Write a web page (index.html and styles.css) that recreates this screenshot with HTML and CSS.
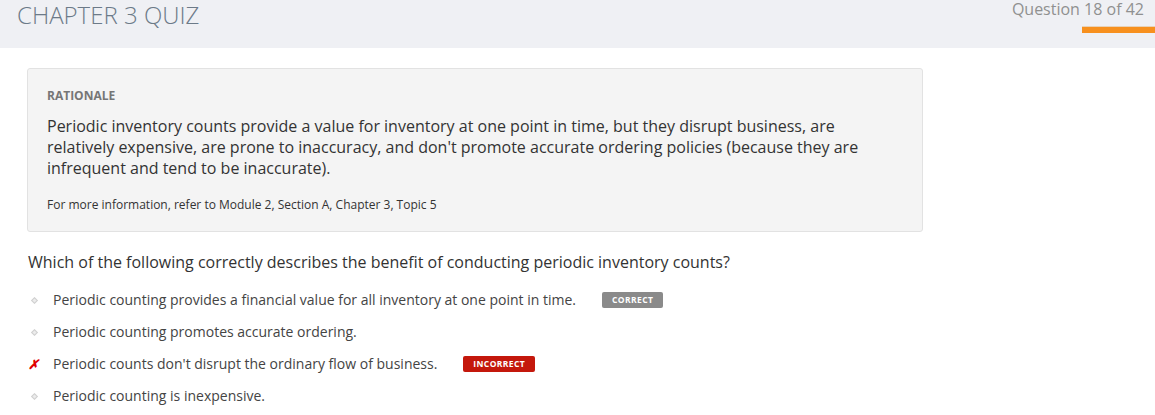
FILE: index.html
```html
<!DOCTYPE html>
<html>
<head>
<meta charset="utf-8">
<link rel="stylesheet" href="styles.css">
</head>
<body>
<header class="topbar">
  <h1 class="title">CHAPTER 3 QUIZ</h1>
  <div class="progress">
    <div class="progress-text">Question 18 of 42</div>
    <div class="progress-bar"></div>
  </div>
</header>
<main class="content">
  <section class="rationale">
    <div class="rationale-label">RATIONALE</div>
    <p class="rationale-body">Periodic inventory counts provide a value for inventory at one point in time, but they disrupt business, are relatively expensive, are prone to inaccuracy, and don't promote accurate ordering policies (because they are infrequent and tend to be inaccurate).</p>
    <p class="rationale-ref">For more information, refer to Module 2, Section A, Chapter 3, Topic 5</p>
  </section>
  <h2 class="question">Which of the following correctly describes the benefit of conducting periodic inventory counts?</h2>
  <ul class="choices">
    <li class="choice"><span class="marker"><span class="dot"></span></span><span class="choice-text">Periodic counting provides a financial value for all inventory at one point in time.</span><span class="badge badge-correct">CORRECT</span></li>
    <li class="choice"><span class="marker"><span class="dot"></span></span><span class="choice-text">Periodic counting promotes accurate ordering.</span></li>
    <li class="choice"><span class="marker marker-cross"><span class="cross">✗</span></span><span class="choice-text">Periodic counts don't disrupt the ordinary flow of business.</span><span class="badge badge-incorrect">INCORRECT</span></li>
    <li class="choice"><span class="marker"><span class="dot"></span></span><span class="choice-text">Periodic counting is inexpensive.</span></li>
  </ul>
</main>
</body>
</html>
```
FILE: styles.css
```css
* { box-sizing: border-box; }
body {
  margin: 0;
  font-family: "Open Sans", "Noto Sans", sans-serif;
  background: #ffffff;
  color: #333;
}
.topbar {
  background: #eff0f4;
  height: 48px;
  display: flex;
  justify-content: space-between;
  align-items: flex-start;
  padding-left: 17px;
}
.title {
  margin: 0;
  font-weight: 300;
  font-size: 24px;
  line-height: 30px;
  color: #6c7a88;
}
.progress {
  display: flex;
  flex-direction: column;
  align-items: flex-end;
}
.progress-text {
  font-size: 16px;
  line-height: 18px;
  color: #909090;
  padding-right: 11px;
}
.progress-bar {
  margin-top: 8px;
  width: 73px;
  height: 7px;
  background: #f7901e;
  border-top: 1px solid #e8d2b8;
}
.content {
  padding: 20px 0 0 27px;
}
.rationale {
  width: 896px;
  height: 164px;
  background: #f4f4f4;
  border: 1px solid #e2e2e2;
  border-radius: 3px;
  padding: 19px 19px 0;
}
.rationale-label {
  font-size: 12px;
  font-weight: 700;
  color: #767676;
  line-height: 16px;
}
.rationale-body {
  margin: 12px 0 0;
  font-size: 16px;
  line-height: 21px;
  color: #333;
}
.rationale-ref {
  margin: 18px 0 0;
  font-size: 12px;
  line-height: 16px;
  color: #333;
}
.question {
  margin: 18px 0 0 1px;
  font-size: 16px;
  font-weight: 400;
  line-height: 24px;
  color: #333;
}
.choices {
  list-style: none;
  margin: 10px 0 0;
  padding: 0;
}
.choice {
  display: flex;
  align-items: center;
  height: 32px;
  font-size: 14px;
  color: #444;
}
.marker {
  width: 26px;
  display: flex;
  justify-content: flex-start;
  align-items: center;
  padding-left: 4px;
}
.marker-cross {
  padding-left: 1px;
}
.dot {
  width: 5px;
  height: 5px;
  margin-left: 1px;
  border: 1px solid #d0d0d0;
  background: #ececec;
  transform: rotate(45deg);
}
.cross {
  color: #e00000;
  font-size: 13px;
  font-weight: 700;
  font-style: italic;
}
.choice-text {
  line-height: 20px;
}
.badge {
  margin-left: 26px;
  font-size: 8.5px;
  font-weight: 700;
  letter-spacing: 0.4px;
  color: #fff;
  padding: 0 10px;
  height: 16px;
  line-height: 16px;
  border-radius: 2px;
}
.badge-correct { background: #8a8a8a; }
.badge-incorrect { background: #c4180c; }
```
